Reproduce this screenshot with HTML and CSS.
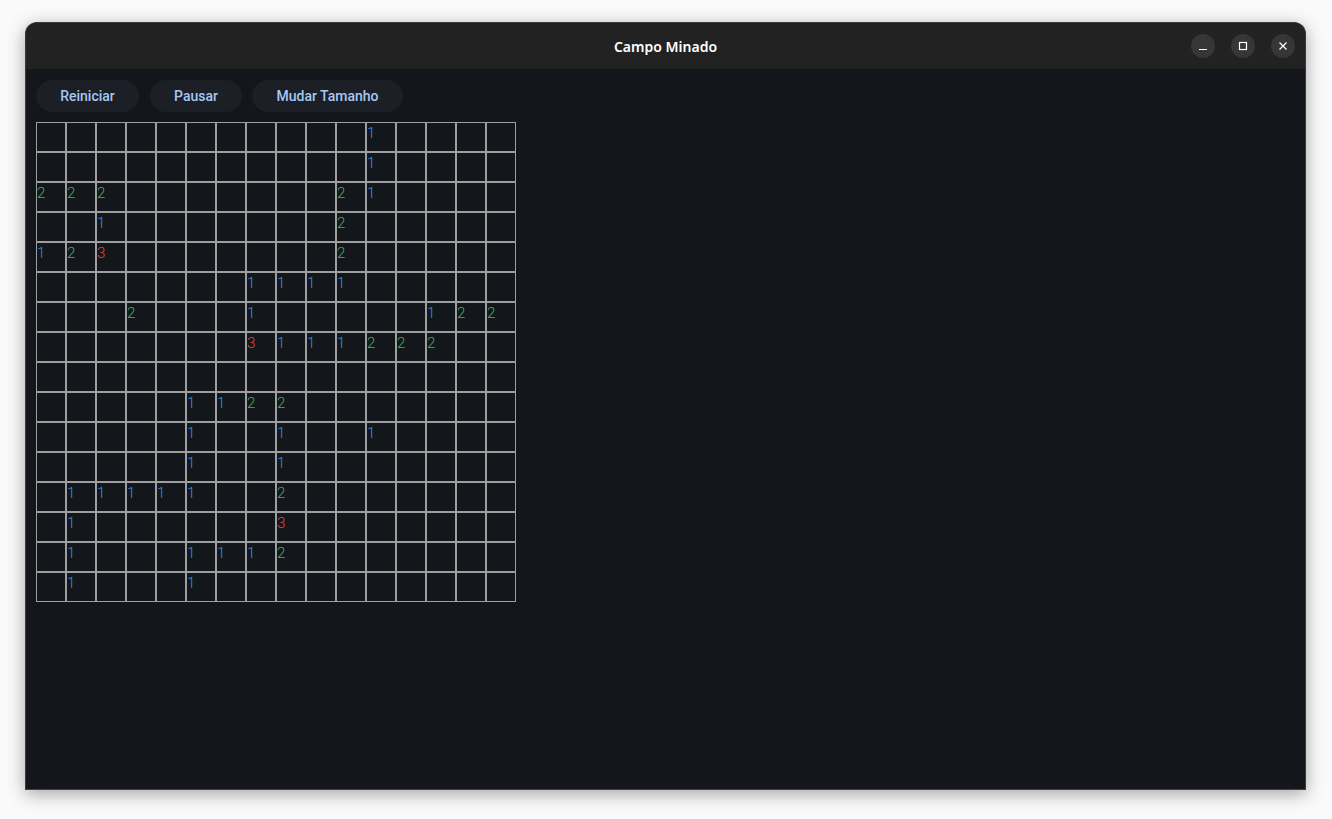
FILE: index.html
```html
<!DOCTYPE html>
<html>
<head>
<meta charset="utf-8">
<link rel="stylesheet" href="styles.css">
</head>
<body>
<div class="window">
  <div class="titlebar">
    <div class="title">Campo Minado</div>
    <div class="controls">
      <div class="ctl"><svg width="10" height="10" viewBox="0 0 10 10"><path d="M1 8.5h8" stroke="#fff" stroke-width="1.2"/></svg></div>
      <div class="ctl"><svg width="10" height="10" viewBox="0 0 10 10"><rect x="1.5" y="1.5" width="7" height="7" fill="none" stroke="#fff" stroke-width="1.2"/></svg></div>
      <div class="ctl"><svg width="10" height="10" viewBox="0 0 10 10"><path d="M1.5 1.5l7 7M8.5 1.5l-7 7" stroke="#fff" stroke-width="1.2"/></svg></div>
    </div>
  </div>
  <div class="content">
    <div class="toolbar">
      <button class="btn">Reiniciar</button>
      <button class="btn">Pausar</button>
      <button class="btn">Mudar Tamanho</button>
    </div>
    <div class="grid" id="grid"></div>
  </div>
</div>
<script src="script.js"></script>
</body>
</html>
```
FILE: styles.css
```css
html, body { margin: 0; padding: 0; }
body {
  width: 1332px; height: 819px;
  background: #fafafa;
  font-family: Roboto, "Noto Sans", sans-serif;
  overflow: hidden;
  box-sizing: border-box;
  padding: 22px 0 0 25px;
}
.window {
  width: 1281px; height: 768px;
  box-sizing: border-box;
  border: 1px solid #3a3a3a;
  border-bottom-color: #444;
  border-radius: 12px 12px 0 0;
  overflow: hidden;
  background: #13161b;
  box-shadow: 0 4px 18px rgba(0,0,0,0.35);
  display: flex; flex-direction: column;
}
.titlebar {
  height: 46px;
  background: #222222;
  display: flex; align-items: center; justify-content: center;
  position: relative;
  flex: none;
}
.title {
  color: #ffffff;
  font-family: "Noto Sans", "Open Sans", sans-serif;
  font-weight: 600;
  font-size: 14px;
}
.controls {
  position: absolute; right: 10px; top: 11px;
  display: flex; gap: 16px;
}
.ctl {
  width: 24px; height: 24px; border-radius: 50%;
  background: #363636;
  display: flex; align-items: center; justify-content: center;
}
.ctl svg { display: block; }
.content { padding: 11px 10px 0 10px; }
.toolbar { display: flex; gap: 11px; }
.btn {
  height: 32px;
  border: none; border-radius: 16px;
  background: #1c1f25;
  color: #a5c8f5;
  font-family: Roboto, sans-serif;
  font-weight: 500; font-size: 14px;
  padding: 0 24px;
  cursor: pointer;
}
.toolbar .btn:nth-child(1) { width: 103px; }
.toolbar .btn:nth-child(2) { width: 92px; }
.toolbar .btn:nth-child(3) { width: 151px; margin-left: -1px; }
.grid {
  margin-top: 10px;
  display: grid;
  grid-template-columns: repeat(16, 30px);
  grid-auto-rows: 30px;
  width: 480px;
}
.cell {
  box-sizing: border-box;
  border: 1px solid #9e9e9e;
  font-family: Roboto, sans-serif;
  font-weight: 300;
  font-size: 15px;
  line-height: 20px;
  padding-left: 0;
}
.n1 { color: #2196f3; }
.n2 { color: #4caf50; }
.n3 { color: #f44336; }
```
FILE: script.js
```js
const rows = [
  {11:1},
  {11:1},
  {0:2,1:2,2:2,10:2,11:1},
  {2:1,10:2},
  {0:1,1:2,2:3,10:2},
  {7:1,8:1,9:1,10:1},
  {3:2,7:1,13:1,14:2,15:2},
  {7:3,8:1,9:1,10:1,11:2,12:2,13:2},
  {},
  {5:1,6:1,7:2,8:2},
  {5:1,8:1,11:1},
  {5:1,8:1},
  {1:1,2:1,3:1,4:1,5:1,8:2},
  {1:1,8:3},
  {1:1,5:1,6:1,7:1,8:2},
  {1:1,5:1}
];
const g = document.getElementById('grid');
rows.forEach(r => {
  for (let c = 0; c < 16; c++) {
    const d = document.createElement('div');
    d.className = 'cell';
    if (r[c]) { d.textContent = r[c]; d.classList.add('n' + r[c]); }
    g.appendChild(d);
  }
});
```
